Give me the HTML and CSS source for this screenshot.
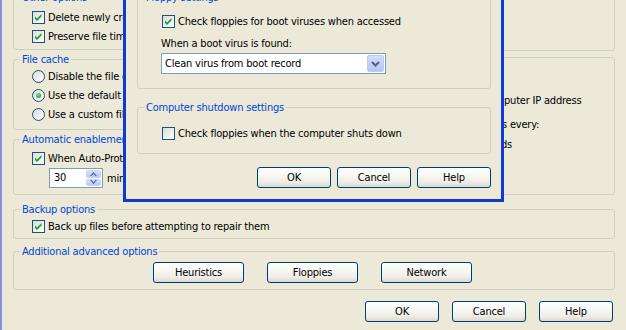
FILE: index.html
```html
<!DOCTYPE html>
<html>
<head>
<meta charset="utf-8">
<link rel="stylesheet" href="styles.css">
</head>
<body>
<div class="window">
  <div class="dialog">
    <div class="top">
      <div class="col">
        <fieldset class="group g-other">
          <legend>Other options</legend>
          <div class="gbody">
            <div class="row"><span class="cb"><svg width="11" height="11" viewBox="0 0 11 11"><polygon points="2,4.5 4,6.5 8.5,2 8.5,4.5 4,9 2,7" fill="#21A121"/></svg></span><span>Delete newly created files infected with a virus</span></div>
            <div class="row"><span class="cb"><svg width="11" height="11" viewBox="0 0 11 11"><polygon points="2,4.5 4,6.5 8.5,2 8.5,4.5 4,9 2,7" fill="#21A121"/></svg></span><span>Preserve file times after scanning</span></div>
          </div>
        </fieldset>
        <fieldset class="group g-cache">
          <legend>File cache</legend>
          <div class="gbody">
            <div class="row"><span class="rb"></span><span>Disable the file cache</span></div>
            <div class="row"><span class="rb on"><span class="dot"></span></span><span>Use the default file cache size</span></div>
            <div class="row"><span class="rb"></span><span>Use a custom file cache size</span></div>
          </div>
        </fieldset>
        <fieldset class="group g-auto">
          <legend>Automatic enablement</legend>
          <div class="gbody">
            <div class="row"><span class="cb"><svg width="11" height="11" viewBox="0 0 11 11"><polygon points="2,4.5 4,6.5 8.5,2 8.5,4.5 4,9 2,7" fill="#21A121"/></svg></span><span>When Auto-Protect is disabled, enable after:</span></div>
            <div class="row spinrow">
              <div class="spin">
                <span class="val">30</span>
                <span class="arrows">
                  <span class="sbtn"><svg width="7" height="4" viewBox="0 0 7 4"><polygon points="0,4 3.5,0 7,4 5.5,4 3.5,1.8 1.5,4" fill="#4D6185"/></svg></span>
                  <span class="sbtn"><svg width="7" height="4" viewBox="0 0 7 4"><polygon points="0,0 3.5,4 7,0 5.5,0 3.5,2.2 1.5,0" fill="#4D6185"/></svg></span>
                </span>
              </div>
              <span class="unit">minutes</span>
            </div>
          </div>
        </fieldset>
      </div>
      <div class="col">
        <fieldset class="group g-r1">
          <legend>Scan settings</legend>
          <div class="gbody"></div>
        </fieldset>
        <fieldset class="group g-r2">
          <legend>Network settings</legend>
          <div class="gbody">
            <div class="row frag f1"><span>puter IP address</span></div>
            <div class="row frag f2"><span>s every:</span></div>
            <div class="row frag f3"><span>ds</span></div>
          </div>
        </fieldset>
      </div>
    </div>

    <fieldset class="group g-backup">
      <legend>Backup options</legend>
      <div class="gbody">
        <div class="row"><span class="cb"><svg width="11" height="11" viewBox="0 0 11 11"><polygon points="2,4.5 4,6.5 8.5,2 8.5,4.5 4,9 2,7" fill="#21A121"/></svg></span><span>Back up files before attempting to repair them</span></div>
      </div>
    </fieldset>

    <fieldset class="group g-adv">
      <legend>Additional advanced options</legend>
      <div class="gbody advrow">
        <button class="btn wide">Heuristics</button>
        <button class="btn wide">Floppies</button>
        <button class="btn wide">Network</button>
      </div>
    </fieldset>

    <div class="buttons">
      <button class="btn">OK</button>
      <button class="btn">Cancel</button>
      <button class="btn">Help</button>
    </div>
  </div>

  <div class="modal">
    <fieldset class="group m-floppy">
      <legend>Floppy settings</legend>
      <div class="gbody">
        <div class="row"><span class="cb"><svg width="11" height="11" viewBox="0 0 11 11"><polygon points="2,4.5 4,6.5 8.5,2 8.5,4.5 4,9 2,7" fill="#21A121"/></svg></span><span>Check floppies for boot viruses when accessed</span></div>
        <div class="hint">When a boot virus is found:</div>
        <div class="combo">
          <span class="txt">Clean virus from boot record</span>
          <span class="dd"><svg width="9" height="6" viewBox="0 0 9 6"><path d="M1 1 L4.5 4.5 L8 1" fill="none" stroke="#4D6185" stroke-width="2"/></svg></span>
        </div>
      </div>
    </fieldset>
    <fieldset class="group m-shut">
      <legend>Computer shutdown settings</legend>
      <div class="gbody">
        <div class="row"><span class="cb"></span><span>Check floppies when the computer shuts down</span></div>
      </div>
    </fieldset>
    <div class="mbuttons">
      <button class="btn def">OK</button>
      <button class="btn">Cancel</button>
      <button class="btn">Help</button>
    </div>
  </div>
</div>
</body>
</html>
```

FILE: styles.css
```css
* { box-sizing: border-box; }
html, body { margin: 0; padding: 0; }
body {
  width: 626px;
  height: 330px;
  overflow: hidden;
  background: #ECE9D8;
  font-family: Tahoma, "DejaVu Sans Condensed", "Liberation Sans", sans-serif;
  font-size: 11px;
  line-height: 13px;
  letter-spacing: -0.2px;
  color: #000;
}
.window {
  position: relative;
  height: 330px;
  border-left: 2px solid #8193DC;
  overflow: hidden;
}
.dialog {
  margin-top: -9px;
  padding: 0 11px;
}
.top {
  display: grid;
  grid-template-columns: 287px 305px;
  column-gap: 10px;
}
.col {
  display: flex;
  flex-direction: column;
  min-width: 0;
}
.group {
  margin: 0;
  padding: 0;
  border: 1px solid #D0D0BF;
  border-radius: 3px;
  min-width: 0;
}
.group > legend {
  margin-left: 6px;
  padding: 0 2px;
  color: #0046D5;
  line-height: 13px;
}
.gbody {
  padding-left: 18px;
  white-space: nowrap;
  overflow: hidden;
}
.row {
  display: flex;
  align-items: center;
  height: 19px;
}
.cb {
  flex: none;
  width: 13px;
  height: 13px;
  border: 1px solid #1C5180;
  background: linear-gradient(135deg, #DCDCD7, #FFFFFF);
  margin-right: 3px;
  display: flex;
}
.cb svg { display: block; }
.rb {
  flex: none;
  width: 13px;
  height: 13px;
  border-radius: 50%;
  border: 1px solid #1C5180;
  background: linear-gradient(135deg, #DCDCD7, #FFFFFF);
  margin-right: 3px;
  display: flex;
  align-items: center;
  justify-content: center;
}
.rb .dot {
  width: 5px;
  height: 5px;
  border-radius: 50%;
  background: radial-gradient(circle at 40% 40%, #8EE88E, #21A121 70%);
}

/* left column groups */
.g-other .gbody { padding-top: 4px; padding-bottom: 3px; }
.g-cache { margin-top: 3px; }
.g-cache .gbody { padding-top: 1px; padding-bottom: 5px; }
.g-auto { margin-top: 3px; }
.g-auto .gbody { padding-top: 3px; padding-bottom: 6px; }
.spinrow { height: 20px; }
.spin {
  width: 54px;
  height: 20px;
  margin-left: 17px;
  border: 1px solid #7F9DB9;
  background: #fff;
  display: flex;
}
.spin .val {
  flex: 1;
  padding-left: 4px;
  line-height: 18px;
}
.spin .arrows {
  width: 16px;
  display: flex;
  flex-direction: column;
  gap: 1px;
  padding: 1px 1px 1px 0;
}
.sbtn {
  flex: 1;
  border-radius: 2px;
  background: linear-gradient(#D6E2FD, #B7CAF6);
  border: 1px solid #C3D3FD;
  display: flex;
  align-items: center;
  justify-content: center;
}
.sbtn svg { display: block; }
.unit { margin-left: 4px; }

/* right column groups */
.g-r1 { height: 60px; }
.g-r2 { flex: 1; }
.g-r2 .gbody { padding-left: 0; padding-top: 27px; }
.frag.f1 { padding-left: 193px; }
.frag.f2 { padding-left: 191px; margin-top: 5px; }
.frag.f3 { padding-left: 190px; height: 20px; }

/* lower groups */
.g-backup { margin-top: 8px; }
.g-backup .gbody { padding-top: 1px; padding-bottom: 2px; }
.g-adv { margin-top: 6px; }
.advrow {
  display: flex;
  gap: 23px;
  padding: 4px 0 6px 139px;
}

.btn {
  flex: none;
  width: 74px;
  height: 21px;
  padding: 0;
  margin: 0;
  border: 1px solid #003C74;
  border-radius: 3px;
  background: linear-gradient(180deg, #FFFFFF 0%, #F8F8F5 35%, #EEEDE7 75%, #DCD7CB 100%);
  font: inherit;
  letter-spacing: inherit;
  line-height: 19px;
  color: #000;
  text-align: center;
}
.btn.wide { width: 91px; }
.buttons {
  display: flex;
  justify-content: flex-end;
  gap: 13px;
  margin-top: 11px;
  padding-right: 2px;
}

/* modal dialog on top */
.modal {
  position: absolute;
  left: 121px;
  top: -23px;
  width: 381px;
  border: 3px solid #0A3BD8;
  background: #ECE9D8;
  padding: 11px 10px 11px 11px;
}
.modal .gbody { padding-left: 23px; }
.modal .cb { margin-left: 1px; }
.m-floppy .gbody { padding-top: 8px; padding-bottom: 14px; }
.hint { margin-top: 6px; }
.combo {
  margin-top: 3px;
  width: 225px;
  height: 21px;
  border: 1px solid #7F9DB9;
  background: #fff;
  display: flex;
}
.combo .txt {
  flex: 1;
  padding-left: 3px;
  line-height: 19px;
}
.combo .dd {
  width: 17px;
  margin: 1px;
  border-radius: 2px;
  border: 1px solid #BACCF5;
  background: linear-gradient(#D2DFFD, #B2C6F5);
  display: flex;
  align-items: center;
  justify-content: center;
}
.combo .dd svg { display: block; }
.m-shut { margin-top: 12px; }
.m-shut .gbody { padding-top: 10px; padding-bottom: 10px; }
.mbuttons {
  display: flex;
  justify-content: flex-end;
  gap: 6px;
  margin-top: 13px;
}
```
